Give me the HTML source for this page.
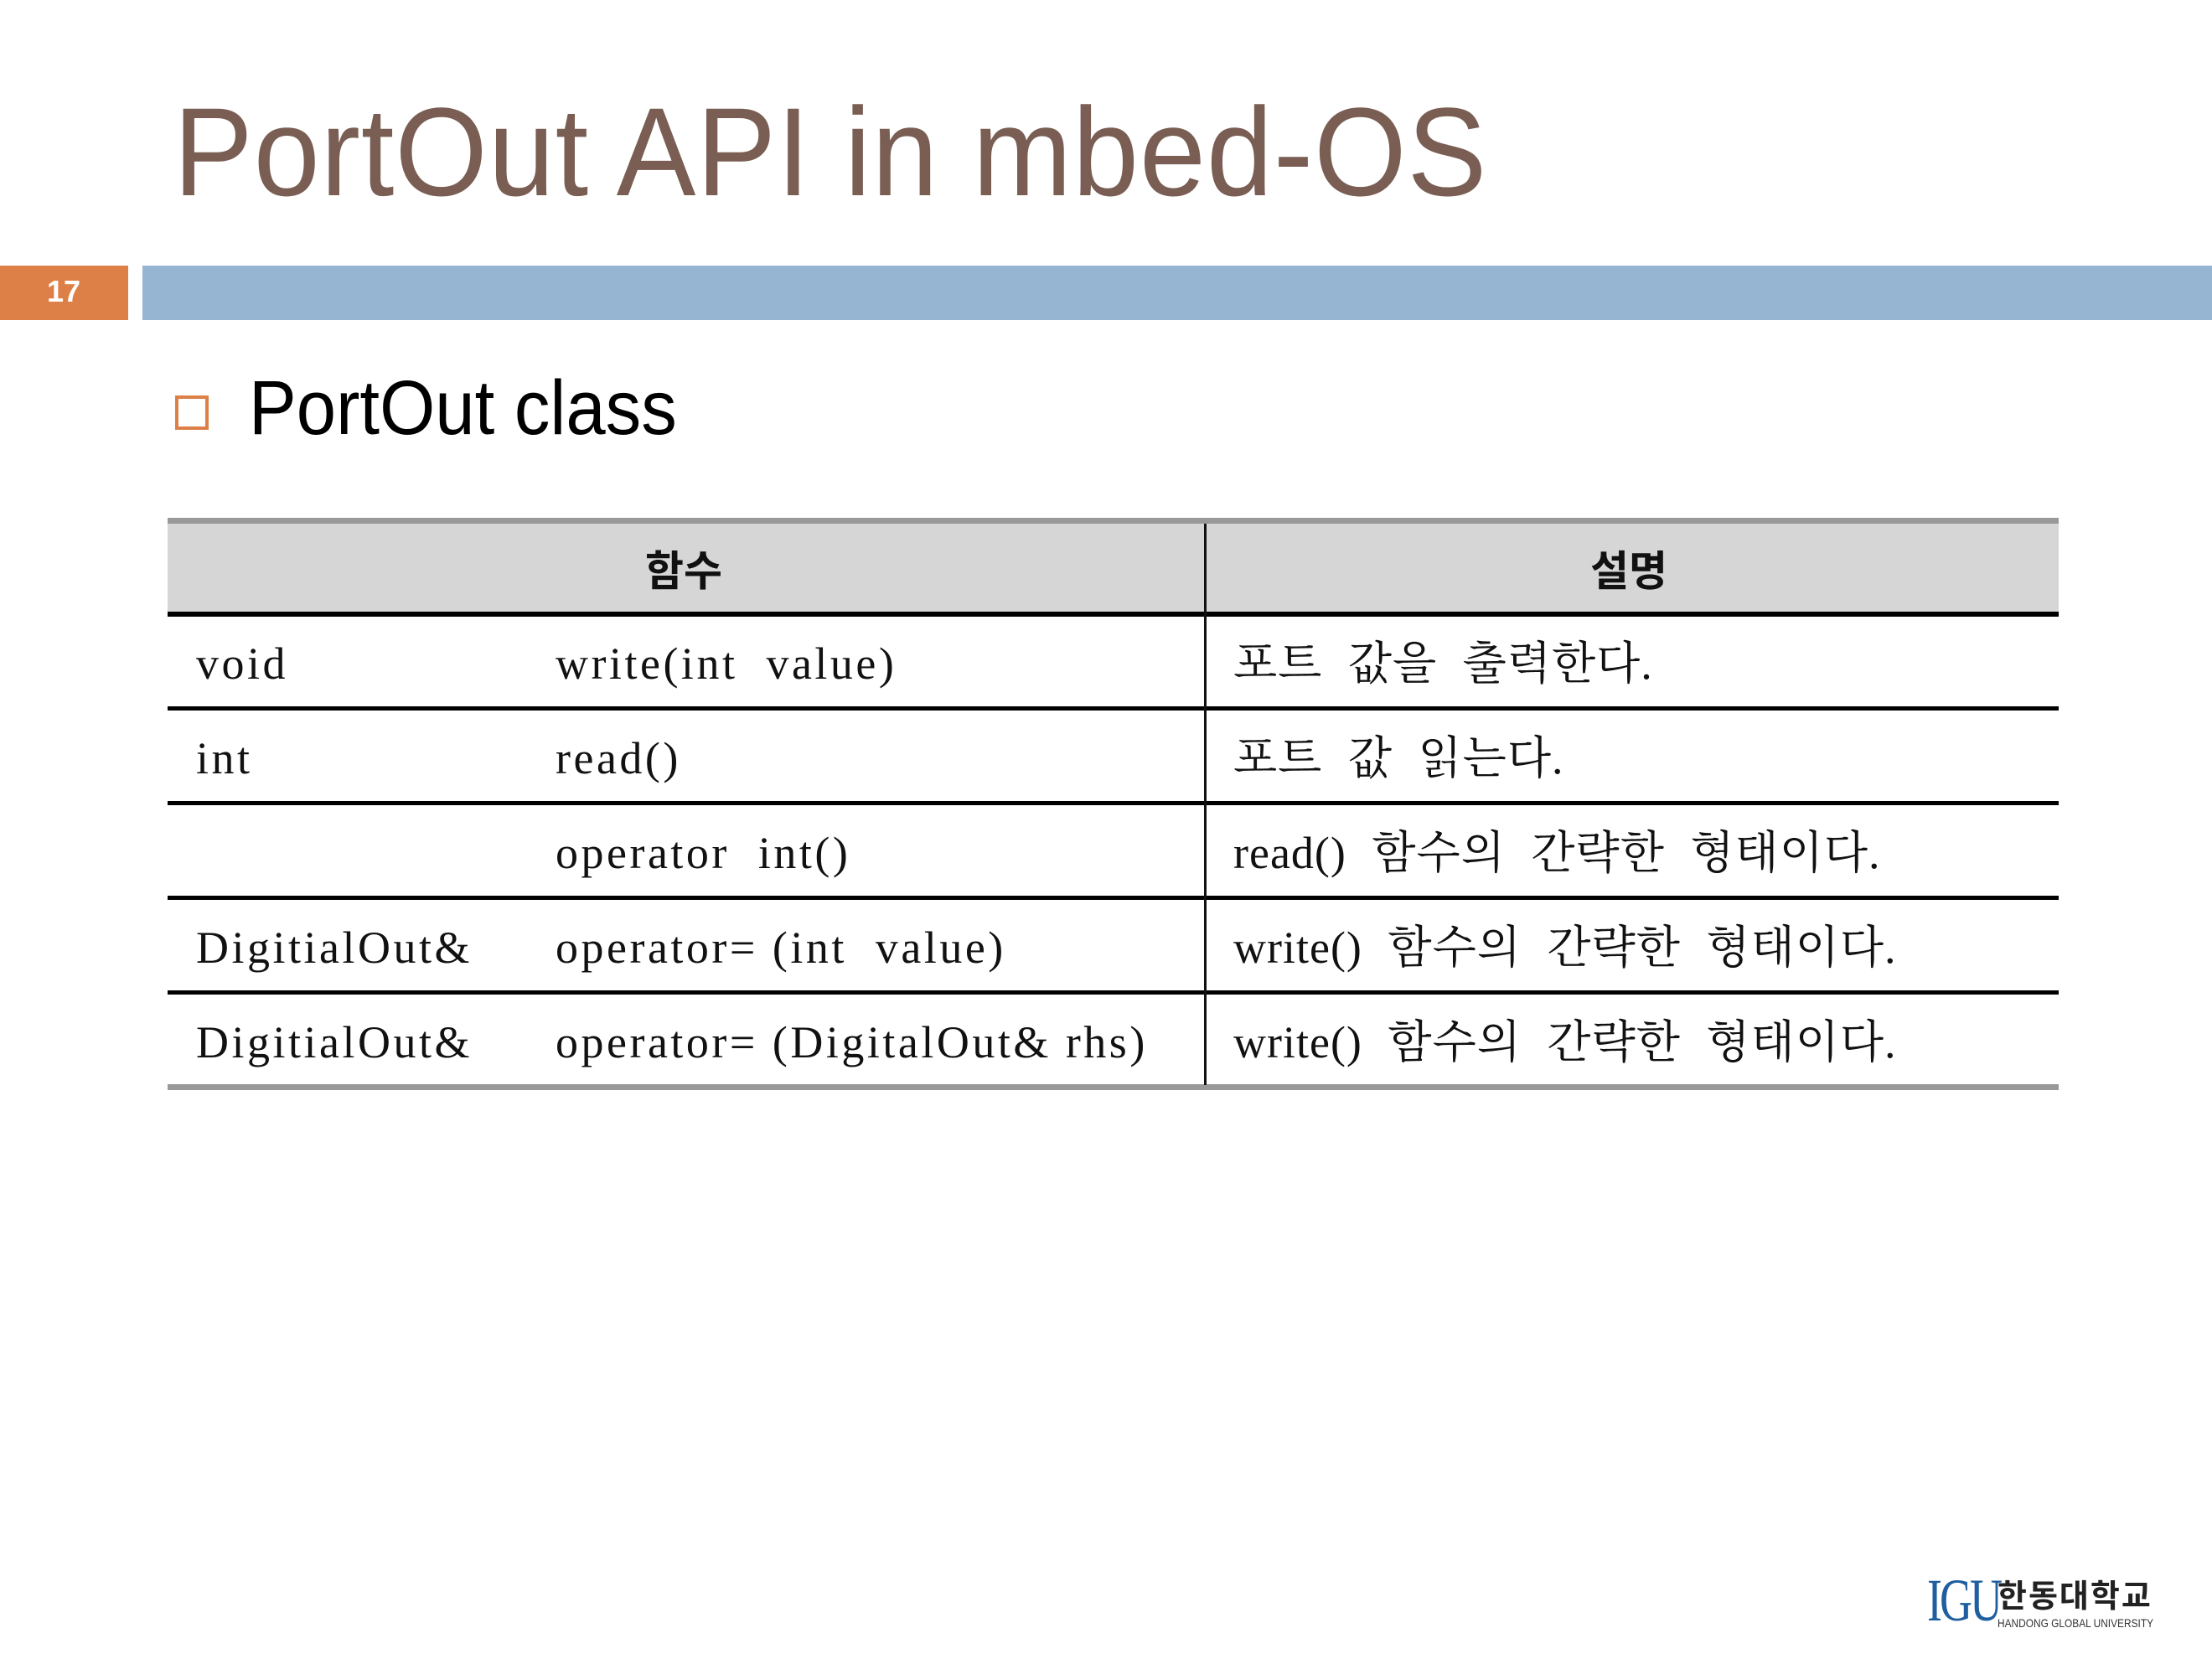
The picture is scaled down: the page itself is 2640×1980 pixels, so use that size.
<!DOCTYPE html>
<html><head><meta charset="utf-8"><style>
*{margin:0;padding:0;box-sizing:border-box}
body{width:2640px;height:1980px;background:#fff;position:relative;overflow:hidden;font-family:"Liberation Sans","Noto Sans CJK KR",sans-serif}
.a{position:absolute;white-space:nowrap}
.title{left:207px;top:96px;font-size:150px;line-height:170px;color:#7a5e54;transform:scaleX(0.947);transform-origin:left top;letter-spacing:1px}
.hl{position:absolute;left:200px;width:2257px;background:#000}
.cell{position:absolute;font-family:"Liberation Serif","Noto Serif CJK KR",serif;font-size:54px;color:#111;white-space:nowrap;line-height:60px;letter-spacing:3.5px}
.k{letter-spacing:1px;word-spacing:16px}
.hd{position:absolute;font-size:50px;font-weight:bold;color:#111;font-family:"Noto Sans CJK KR",sans-serif;line-height:60px}
</style></head><body>
<div class="a title">PortOut API in mbed-OS</div>
<div class="a" style="left:0;top:317px;width:153px;height:65px;background:#dd8048"></div>
<div class="a" style="left:56px;top:323px;font-size:36px;font-weight:bold;color:#fff;line-height:50px">17</div>
<div class="a" style="left:170px;top:317px;width:2470px;height:65px;background:#95b5d2"></div>
<div class="a" style="left:209px;top:472px;width:40px;height:41px;border:4px solid #dd8048"></div>
<div class="a" style="left:297px;top:432px;font-size:92px;line-height:110px;color:#000;transform:scaleX(0.925);transform-origin:left top">PortOut class</div>

<div class="a" style="left:200px;top:618px;width:2257px;height:7px;background:#999"></div>
<div class="a" style="left:200px;top:625px;width:2257px;height:106px;background:#d6d6d6"></div>
<div class="hl" style="top:730px;height:6px"></div>
<div class="hl" style="top:843px;height:5px"></div>
<div class="hl" style="top:956px;height:5px"></div>
<div class="hl" style="top:1069px;height:5px"></div>
<div class="hl" style="top:1182px;height:5px"></div>
<div class="a" style="left:200px;top:1294px;width:2257px;height:7px;background:#999"></div>
<div class="a" style="left:1437px;top:625px;width:3px;height:670px;background:#111"></div>

<div class="hd" style="left:770px;top:648px">함수</div>
<div class="hd" style="left:1898px;top:648px">설명</div>

<div class="cell" style="left:234px;top:762px">void</div>
<div class="cell" style="left:663px;top:762px">write(int&nbsp; value)</div>
<div class="cell k" style="left:1472px;top:762px">포트 값을 출력한다.</div>

<div class="cell" style="left:234px;top:875px">int</div>
<div class="cell" style="left:663px;top:875px">read()</div>
<div class="cell k" style="left:1472px;top:875px">포트 값 읽는다.</div>

<div class="cell" style="left:663px;top:988px">operator&nbsp; int()</div>
<div class="cell k" style="left:1472px;top:988px">read() 함수의 간략한 형태이다.</div>

<div class="cell" style="left:234px;top:1101px">DigitialOut&amp;</div>
<div class="cell" style="left:663px;top:1101px">operator= (int&nbsp; value)</div>
<div class="cell k" style="left:1472px;top:1101px">write() 함수의 간략한 형태이다.</div>

<div class="cell" style="left:234px;top:1214px">DigitialOut&amp;</div>
<div class="cell" style="left:663px;top:1214px">operator= (DigitalOut&amp; rhs)</div>
<div class="cell k" style="left:1472px;top:1214px">write() 함수의 간략한 형태이다.</div>

<div class="a" style="left:2300px;top:1872px;font-family:'Liberation Serif',serif;font-size:72px;line-height:76px;color:#1f5fa0;letter-spacing:-4px;transform:scaleX(0.75);transform-origin:left top">IGU</div>
<div class="a" style="left:2384px;top:1880px;font-size:38px;font-weight:bold;line-height:44px;color:#222;font-family:'Noto Sans CJK KR',sans-serif;letter-spacing:2px">한동대학교</div>
<div class="a" style="left:2384px;top:1928px;font-size:14px;line-height:18px;color:#333;transform:scaleX(0.85);transform-origin:left top">HANDONG GLOBAL UNIVERSITY</div>
</body></html>
